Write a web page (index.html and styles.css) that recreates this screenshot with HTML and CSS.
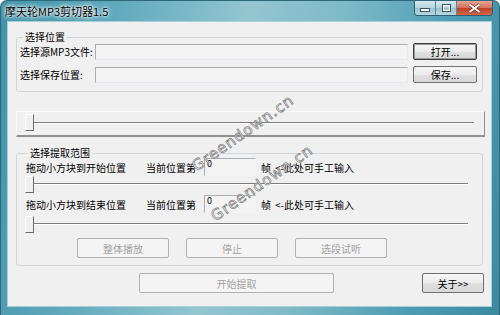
FILE: index.html
```html
<!DOCTYPE html>
<html>
<head>
<meta charset="utf-8">
<title>摩天轮MP3剪切器1.5</title>
<link rel="stylesheet" href="styles.css">
</head>
<body>

<div class="window">

<!-- TITLE BAR -->
<div class="titleBar">
<span class="titleText">摩天轮MP3剪切器1.5</span>
<div class="captionButtons">
<span class="capBtn capMin"><svg width="20" height="14" viewBox="0 0 20 14"><rect x="5.5" y="7.5" width="9" height="3" fill="#fff" stroke="#3a5560"/></svg></span>
<span class="capBtn capMax"><svg width="20" height="14" viewBox="0 0 20 14"><rect x="6.5" y="3.5" width="8" height="7" fill="none" stroke="#3a5560"/><rect x="7.5" y="4.5" width="6" height="5" fill="none" stroke="#fff"/></svg></span>
<span class="capBtn capClose"><svg width="35" height="14" viewBox="0 0 35 14"><path d="M12.5 3.5 L22.5 11 M22.5 3.5 L12.5 11" stroke="#6a2a20" stroke-width="3.4"/><path d="M12.5 3.5 L22.5 11 M22.5 3.5 L12.5 11" stroke="#fff" stroke-width="2"/></svg></span>
</div>
</div> <!-- titleBar -->

<div class="client">

<!-- GROUP: location -->
<fieldset class="group groupPath">
<legend>选择位置</legend>
<div class="pathRow">
<span class="pathLabel">选择源MP3文件:</span>
<div class="edit pathEdit"></div>
<button class="btn btnDefault">打开...</button>
</div>
<div class="pathRow second">
<span class="pathLabel">选择保存位置:</span>
<div class="edit pathEdit"></div>
<button class="btn">保存...</button>
</div>
</fieldset>

<!-- MAIN SLIDER -->
<div class="bigSlider">
<div class="slider">
<div class="thumb"></div>
<div class="track wide"></div>
</div>
</div>

<!-- GROUP: range -->
<fieldset class="group groupRange">
<legend>选择提取范围</legend>
<div class="posRow first">
<span class="posLabel">拖动小方块到开始位置</span>
<span class="curLabel">当前位置第</span>
<div class="edit frameEdit">0</div>
<span class="unit">帧</span>
<span class="hint">&lt;-此处可手工输入</span>
</div>
<div class="slider small">
<div class="thumb"></div>
<div class="track"></div>
</div>
<div class="posRow">
<span class="posLabel">拖动小方块到结束位置</span>
<span class="curLabel">当前位置第</span>
<div class="edit frameEdit">0</div>
<span class="unit">帧</span>
<span class="hint">&lt;-此处可手工输入</span>
</div>
<div class="slider small last">
<div class="thumb"></div>
<div class="track"></div>
</div>
<div class="playRow">
<button class="btn playBtn" disabled>整体播放</button>
<button class="btn playBtn" disabled>停止</button>
<button class="btn playBtn" disabled>选段试听</button>
</div>
</fieldset>

<!-- BOTTOM BUTTONS -->
<div class="bottomRow">
<button class="btn startBtn" disabled>开始提取</button>
<button class="btn aboutBtn">关于&gt;&gt;</button>
</div>

<div class="watermark wm1">Greendown.cn</div>
<div class="watermark wm2">Greendown.cn</div>

</div> <!-- client -->
</div> <!-- window -->

</body>
</html>
```

FILE: styles.css
```css
html, body
{
margin:0;
padding:0;
width:500px;
height:315px;
overflow:hidden;
background:#fff;
}

body
{
font-family:"Noto Sans CJK SC", "Noto Sans", sans-serif;
font-size:10px;
color:#000;
}

div.window
{
width:500px;
height:315px;
box-sizing:border-box;
border-radius:7px 7px 0 0;
border:1px solid #2d6878;
border-bottom:none;
background:linear-gradient(100deg, #3f93a9 0%, #62aabd 22%, #93c6d1 45%, #7fbac8 62%, #4f9eb3 82%, #3a8aa2 100%);
display:flex;
flex-direction:column;
}

/* title bar */
div.titleBar
{
height:21px;
display:flex;
align-items:flex-start;
}

span.titleText
{
padding-left:4px;
line-height:21px;
font-size:11px;
color:#000;
text-shadow:0 0 4px #fff, 0 0 2px #fff, 0 0 6px #fff;
flex:1;
}

div.captionButtons
{
display:flex;
margin-right:6px;
border:1px solid #2f5f70;
border-top:none;
border-radius:0 0 4px 4px;
overflow:hidden;
height:14px;
}

span.capBtn
{
display:block;
height:14px;
}

span.capMin, span.capMax
{
width:20px;
background:linear-gradient(#d7e9ee, #b4d4dd 50%, #98c2cf 51%, #b7d8e2);
border-right:1px solid #5d8a98;
}

span.capClose
{
width:35px;
background:linear-gradient(#e7a696, #d2705c 50%, #c0402a 51%, #d0664a);
}

/* client area */
div.client
{
position:relative;
margin:0 8px 0 7px;
height:284px;
background:#f0f0f0;
box-shadow:0 0 0 1px #a9cfd9;
overflow:hidden;
}

fieldset.group
{
margin:9px 8px 0 8px;
padding:0 0 8px 3px;
border:1px solid #d0d5d8;
border-radius:3px;
min-width:0;
}

fieldset.group legend
{
font-size:10px;
line-height:12px;
padding:0 2px;
margin-left:3px;
}

div.pathRow
{
display:flex;
align-items:center;
height:17px;
}

div.pathRow.second
{
margin-top:6px;
}

span.pathLabel
{
width:75px;
white-space:nowrap;
}

div.edit
{
box-sizing:border-box;
border:1px solid;
border-color:#abadb3 #e3e9ef #e3e9ef #abadb3;
background:#f3f3f3;
}

div.pathEdit
{
width:313px;
height:16px;
}

button.btn
{
font-family:"Noto Sans CJK SC", "Noto Sans", sans-serif;
font-size:10px;
color:#000;
padding:0;
margin:0;
box-sizing:border-box;
border:1px solid #707070;
border-radius:2px;
background:linear-gradient(#f6f6f6, #ececec 50%, #e0e0e0 51%, #d8d8d8);
}

button.btn:disabled
{
color:#a3a3a3;
border-color:#adb2b5;
background:#f4f4f4;
}

div.pathRow button.btn
{
margin-left:5px;
width:64px;
height:17px;
line-height:14px;
}

button.btnDefault
{
border-color:#3c3c3c;
box-shadow:inset 0 0 0 1px #9a9a9a;
}

/* sliders */
div.bigSlider
{
margin:19px 6px 0 8px;
height:26px;
box-sizing:border-box;
border-style:solid;
border-width:1px 1px 2px 1px;
border-color:#fbfbfb #8f8f8f #8f8f8f #fbfbfb;
padding:2px 0 0 8px;
}

div.slider
{
display:flex;
align-items:flex-start;
height:17px;
}

div.thumb
{
width:9px;
height:17px;
box-sizing:border-box;
border:1px solid;
border-color:#fff #6a6a6a #6a6a6a #fff;
}

div.track
{
width:434px;
height:0;
margin-top:7px;
border-top:1px solid #7c7c7c;
border-bottom:1px solid #fff;
}

div.track.wide
{
width:440px;
margin-top:8px;
}

/* range group */
fieldset.groupRange
{
margin-top:10px;
padding:0 0 7px 8px;
}

div.posRow
{
display:flex;
align-items:center;
height:18px;
margin-top:2px;
white-space:nowrap;
}

div.posRow.first
{
margin-top:-1px;
}

span.posLabel
{
margin-left:1px;
width:120px;
}

span.curLabel
{
width:58px;
}

div.frameEdit
{
width:52px;
height:18px;
padding:0 2px;
font-size:9px;
line-height:10px;
border-right-color:#f3f3f3;
border-bottom-color:#f3f3f3;
}

span.unit
{
margin-left:5px;
}

span.hint
{
margin-left:4px;
}

div.slider.last
{
margin-top:3px;
}

div.playRow
{
display:flex;
margin-top:5px;
margin-left:52px;
gap:17px;
}

button.playBtn
{
width:92px;
height:20px;
}

/* bottom */
div.bottomRow
{
display:flex;
margin:7px 7px 0 131px;
}

button.startBtn
{
width:195px;
height:20px;
}

button.aboutBtn
{
margin-left:auto;
width:62px;
height:20px;
}

/* watermark */
div.watermark
{
position:absolute;
font-family:"DejaVu Sans", sans-serif;
font-size:15px;
letter-spacing:1px;
color:#fff;
-webkit-text-stroke:0.7px #7a7a7a;
transform:translate(-50%, -50%) rotate(-35deg);
white-space:nowrap;
}

div.wm1
{
left:235px;
top:111px;
}

div.wm2
{
left:254px;
top:161px;
}
```
